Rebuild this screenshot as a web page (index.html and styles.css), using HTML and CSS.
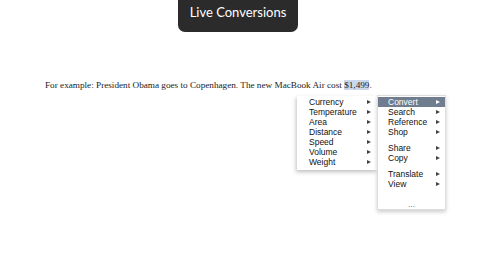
FILE: index.html
```html
<!DOCTYPE html>
<html>
<head>
  <title>Live Conversions</title>
  <link rel="stylesheet" href="styles.css">
</head>
<body>

<div class="tab">Live Conversions</div>

<p class="sample">For example: President Obama goes to Copenhagen. The new MacBook Air cost <span class="sel">$1,499</span>.</p>

<div class="menus">
  <ul class="menu units">
    <li>Currency</li>
    <li>Temperature</li>
    <li>Area</li>
    <li>Distance</li>
    <li>Speed</li>
    <li>Volume</li>
    <li>Weight</li>
  </ul>
  <ul class="menu context">
    <li class="active">Convert</li>
    <li>Search</li>
    <li>Reference</li>
    <li>Shop</li>
    <li class="sep"></li>
    <li>Share</li>
    <li>Copy</li>
    <li class="sep"></li>
    <li>Translate</li>
    <li>View</li>
    <li class="more">...</li>
  </ul>
</div>

</body>
</html>
```

FILE: styles.css
```css
body {
  margin: 0;
  background-color: #fff;
}

.tab {
  width: 120px;
  height: 32px;
  margin: 0 auto;
  position: relative;
  left: -2px;
  background-color: #2b2b2b;
  border-radius: 0 0 7px 7px;
  color: #fff;
  font-family: "Lato", sans-serif;
  font-size: 13px;
  line-height: 25px;
  text-align: center;
}

.sample {
  margin: 48px 0 0 45px;
  font-family: "Liberation Serif", serif;
  font-size: 9.2px;
  color: #222;
}

.sel {
  background-color: #cbd8ec;
}

.menus {
  position: absolute;
  left: 297px;
  top: 95px;
  display: flex;
  align-items: flex-start;
}

.menu {
  list-style: none;
  margin: 0;
  background-color: #fff;
  font-family: "Liberation Sans", sans-serif;
  font-size: 8.5px;
  color: #111;
}

.menu li {
  position: relative;
  height: 10px;
  line-height: 10px;
}

.menu li::after {
  content: "";
  position: absolute;
  top: 3px;
  border-left: 4px solid #444;
  border-top: 2.5px solid transparent;
  border-bottom: 2.5px solid transparent;
}

.units {
  width: 80px;
  margin-top: 1px;
  padding: 1px 0 3px 0;
  box-sizing: border-box;
  box-shadow: -1px 2px 4px rgba(0, 0, 0, 0.25);
}

.units li {
  padding-left: 12px;
}

.units li::after {
  left: 70px;
}

.context {
  width: 69px;
  height: 115px;
  padding: 1px 0 0 0;
  box-sizing: border-box;
  border: 1px solid #ddd;
  box-shadow: 0 2px 4px rgba(0, 0, 0, 0.2);
}

.context li {
  padding-left: 10px;
}

.context li::after {
  left: 58px;
}

.context li.active {
  background-color: #6f7d8e;
  color: #fff;
}

.context li.active::after {
  border-left-color: #fff;
}

.context li.sep {
  height: 6px;
}

.context li.more {
  margin-top: 10px;
  padding-left: 0;
  text-align: center;
  color: #777;
}

.context li.sep::after,
.context li.more::after {
  display: none;
}
```
